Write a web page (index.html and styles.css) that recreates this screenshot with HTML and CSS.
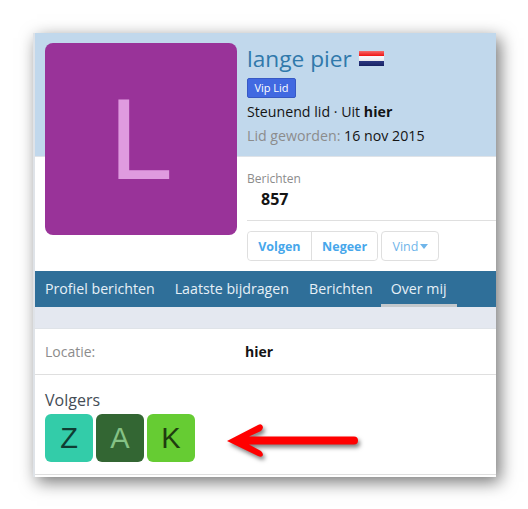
FILE: index.html
```html
<!DOCTYPE html>
<html lang="nl">
<head>
    <meta charset="UTF-8">
    <meta name="viewport" content="width=device-width, initial-scale=1.0">
    <title>lange pier</title>
    <link rel="stylesheet" href="styles.css">
</head>
<body>

<div class="panel">
    <div class="profile">
        <div class="avatar">L</div>
        <div class="profile-main">
            <div class="profile-top">
                <h1 class="name">lange pier
                    <svg class="flag" viewBox="0 0 25 15" width="25" height="15">
                        <defs>
                            <linearGradient id="gloss" x1="0" y1="0" x2="0" y2="1">
                                <stop offset="0" stop-color="#fff" stop-opacity="0.35"/>
                                <stop offset="0.3" stop-color="#fff" stop-opacity="0"/>
                                <stop offset="1" stop-color="#000" stop-opacity="0.25"/>
                            </linearGradient>
                        </defs>
                        <rect width="25" height="5" fill="#f01c1c"/>
                        <rect y="5" width="25" height="5" fill="#f8f8fc"/>
                        <rect y="10" width="25" height="5" fill="#1c2a80"/>
                        <rect width="25" height="15" fill="url(#gloss)"/>
                    </svg>
                </h1>
                <span class="badge">Vip Lid</span>
                <div class="line">Steunend lid · Uit <b>hier</b></div>
                <div class="line"><span class="muted">Lid geworden:</span> 16 nov 2015</div>
            </div>
            <div class="stats">
                <div class="stat-label">Berichten</div>
                <div class="stat-value">857</div>
            </div>
            <div class="actions">
                <div class="btn-group">
                    <button class="btn">Volgen</button>
                    <button class="btn">Negeer</button>
                </div>
                <button class="btn-find">Vind<span class="caret"></span></button>
            </div>
        </div>
    </div>

    <div class="tabs">
        <a class="tab">Profiel berichten</a>
        <a class="tab">Laatste bijdragen</a>
        <a class="tab">Berichten</a>
        <a class="tab active">Over mij</a>
    </div>

    <div class="about">
        <div class="row">
            <span class="row-label">Locatie:</span>
            <b>hier</b>
        </div>
        <div class="followers">
            <div class="followers-title">Volgers</div>
            <div class="follower-list">
                <div class="follower f-z">Z</div>
                <div class="follower f-a">A</div>
                <div class="follower f-k">K</div>
            </div>
        </div>
    </div>

    <!-- rode pijl over de inhoud -->
    <svg class="arrow" viewBox="0 0 136 36" width="136" height="36">
        <path d="M2 17 L33 1 Q37 -1 38 3 Q38 5 36 7 L24 12.5 L129 12.5 Q133 12.5 133 16.5 Q133 20.5 129 20.5 L24 20.5 L36 27 Q38 29 38 31 Q37 34 33 32 Z" fill="#ff0000"/>
    </svg>
</div>

</body>
</html>
```

FILE: styles.css
```css
body {
    margin: 0;
    height: 509px;
    overflow: hidden;
    background-color: white;
    font-family: "Open Sans", Arial, sans-serif;
    font-size: 14px;
    color: #141414;
}
.panel {
    position: relative;
    display: flex;
    flex-direction: column;
    box-sizing: border-box;
    width: 463px;
    height: 444px;
    margin: 33px 0 0 33px;
    background-color: #e4e8f0;
    border-left: 2px solid #dfe3e8;
    box-shadow: 4px 5px 16px rgba(0, 0, 0, 0.55);
}
.profile {
    display: flex;
    gap: 10px;
    height: 238px;
    padding: 10px 0 0 10px;
    box-sizing: border-box;
    background: linear-gradient(#c1d8ec 123px, #dfe3e8 123px, #dfe3e8 124px, white 124px);
}
.avatar {
    flex: none;
    display: flex;
    align-items: center;
    justify-content: center;
    width: 192px;
    height: 192px;
    border-radius: 8px;
    background-color: #993399;
    color: #df9bdf;
    font-family: "Liberation Sans", Arial, sans-serif;
    font-size: 115px;
}
.profile-main {
    flex: 1;
    min-width: 0;
}
.profile-top {
    height: 114px;
}
.name {
    display: flex;
    align-items: center;
    gap: 7px;
    margin: 0;
    height: 30px;
    font-size: 22.7px;
    font-weight: normal;
    color: #3079ab;
}
.flag {
    margin-top: 1px;
}
.badge {
    display: block;
    box-sizing: border-box;
    width: 49px;
    height: 20px;
    margin-top: 5px;
    border: 1px solid #3759c4;
    border-radius: 2px;
    background-color: #4169e1;
    color: white;
    font-size: 11px;
    line-height: 18px;
    text-align: center;
}
.line {
    margin-top: 3px;
    height: 21px;
    font-size: 14.2px;
    line-height: 21px;
}
.muted {
    color: #8c8c8c;
}
.stats {
    box-sizing: border-box;
    height: 64px;
    padding-top: 13px;
    border-bottom: 1px solid #dfdfdf;
}
.stat-label {
    font-size: 12px;
    color: #8c8c8c;
}
.stat-value {
    margin: 1px 0 0 14px;
    font-size: 16px;
    font-weight: bold;
}
.actions {
    display: flex;
    gap: 3px;
    margin-top: 10px;
}
.btn-group {
    display: flex;
    border: 1px solid #dfdfdf;
    border-radius: 4px;
}
.btn, .btn-find {
    margin: 0;
    background-color: white;
    color: #47a7eb;
    font-family: inherit;
    font-size: 12.5px;
}
.btn {
    height: 28px;
    padding: 0 10.25px;
    border: none;
    font-weight: bold;
}
.btn:first-child {
    border-radius: 4px 0 0 4px;
}
.btn:last-child {
    border-radius: 0 4px 4px 0;
}
.btn + .btn {
    border-left: 1px solid #dfdfdf;
}
.btn-find {
    box-sizing: border-box;
    height: 30px;
    width: 58px;
    padding: 0;
    border: 1px solid #dfdfdf;
    border-radius: 4px;
    color: #6fb5ea;
    font-weight: normal;
}
.caret {
    display: inline-block;
    margin-left: 2px;
    vertical-align: 2px;
    border-top: 5px solid #6fb5ea;
    border-left: 4px solid transparent;
    border-right: 4px solid transparent;
}
.tabs {
    display: flex;
    gap: 20px;
    height: 36px;
    padding-left: 10px;
    background-color: #2f6f99;
}
.tab {
    font-size: 14.2px;
    line-height: 35px;
    color: #e6f0f7;
}
.tab.active {
    box-sizing: border-box;
    height: 36px;
    margin-left: -12px;
    padding: 0 10px;
    border-bottom: 3px solid #c3c8cc;
}
.about {
    flex: 1;
    margin-top: 21px;
    border-top: 1px solid #dfe3e8;
    background-color: white;
}
.row {
    display: grid;
    grid-template-columns: 200px 1fr;
    align-items: center;
    height: 45px;
    padding-left: 10px;
    border-bottom: 1px solid #dfdfdf;
}
.row-label {
    color: #8c8c8c;
}
.followers {
    height: 100px;
    box-sizing: border-box;
    padding: 15px 0 0 10px;
    border-bottom: 1px solid #dfdfdf;
}
.followers-title {
    font-size: 16px;
    line-height: 21px;
    color: #444c55;
}
.follower-list {
    display: flex;
    gap: 3px;
    margin-top: 3px;
}
.follower {
    display: flex;
    align-items: center;
    justify-content: center;
    width: 48px;
    height: 48px;
    border-radius: 6px;
    font-family: "Liberation Sans", Arial, sans-serif;
    font-size: 29px;
}
.f-z {
    background-color: #33cca9;
    color: #0f3d33;
}
.f-a {
    background-color: #336633;
    color: #85c285;
}
.f-k {
    background-color: #66cc33;
    color: #1f3d0f;
}
.arrow {
    position: absolute;
    left: 190px;
    top: 391px;
    overflow: visible;
    filter: drop-shadow(2px 3px 2px rgba(0, 0, 0, 0.5));
}
```
